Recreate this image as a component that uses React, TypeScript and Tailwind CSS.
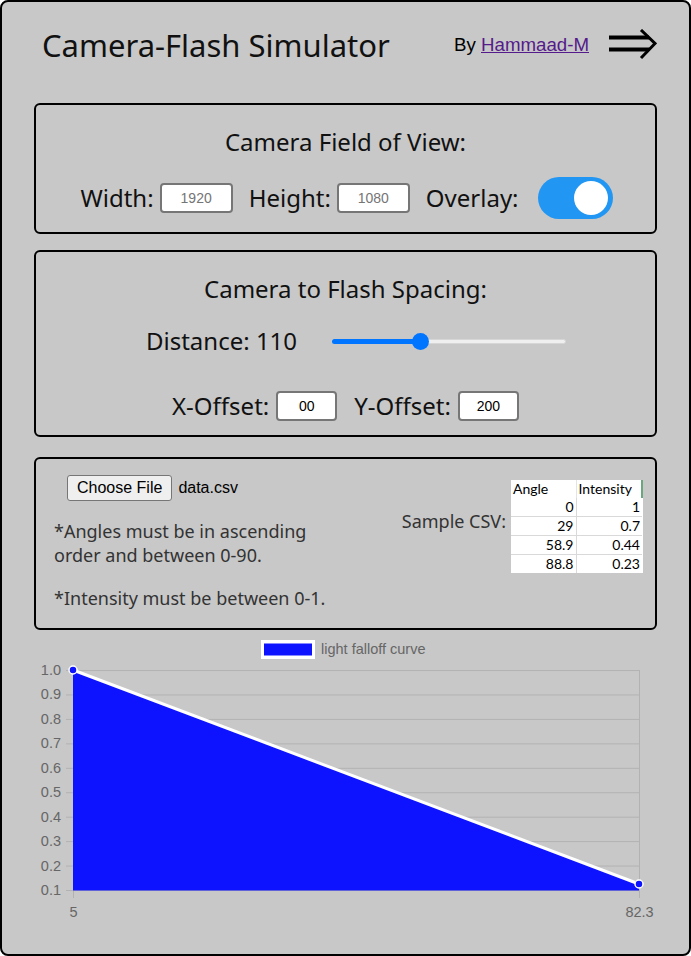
import React from "react";

const rows = [
    ["0", "1"],
    ["29", "0.7"],
    ["58.9", "0.44"],
    ["88.8", "0.23"],
];

function Chart() {
    const ticks = [1.0, 0.9, 0.8, 0.7, 0.6, 0.5, 0.4, 0.3, 0.2, 0.1];
    const yOf = (v: number) => 890 - ((v - 0.1) / 0.1) * 24.44;
    const blue = "#0d12ff";
    return (
        <svg width="687" height="296" viewBox="2 630 687 296" className="block -mx-[32px]">
            <rect x="261" y="640" width="54" height="19" fill="#fff" />
            <rect x="264" y="643.5" width="48" height="12" fill={blue} />
            <text x="321" y="654" fontSize="14.5" fill="#666" fontFamily="'Liberation Sans', Arial, sans-serif">
                light falloff curve
            </text>
            {ticks.map((t) => (
                <g key={t}>
                    <line x1="66" x2="639" y1={yOf(t) + 0.5} y2={yOf(t) + 0.5} stroke="#b2b2b2" strokeWidth="1" />
                    <text x="61" y={yOf(t) + 5} textAnchor="end" fontSize="14.5" fill="#666" fontFamily="'Liberation Sans', Arial, sans-serif">
                        {t.toFixed(1)}
                    </text>
                </g>
            ))}
            <line x1="73.5" x2="73.5" y1="670" y2="898" stroke="#b2b2b2" />
            <line x1="639.5" x2="639.5" y1="670" y2="898" stroke="#b2b2b2" />
            <polygon points={`73,670 639,884 639,890.5 73,890.5`} fill={blue} />
            <line x1="73" y1="670" x2="639" y2="884" stroke="#fff" strokeWidth="3" />
            <circle cx="73" cy="670" r="4" fill={blue} stroke="#fff" strokeWidth="1.5" />
            <circle cx="639" cy="884" r="4" fill={blue} stroke="#fff" strokeWidth="1.5" />
            <text x="73.5" y="917" textAnchor="middle" fontSize="14.5" fill="#666" fontFamily="'Liberation Sans', Arial, sans-serif">5</text>
            <text x="639.5" y="917" textAnchor="middle" fontSize="14.5" fill="#666" fontFamily="'Liberation Sans', Arial, sans-serif">82.3</text>
        </svg>
    );
}

function NumBox({ value, placeholder, w }: { value?: string; placeholder?: string; w: string }) {
    return (
        <div className={`${w} h-[30px] bg-white border-2 border-[#767676] rounded-[4px] flex items-center justify-center text-[14px] font-['Liberation_Sans',Arial,sans-serif]`}>
            {value ? <span className="text-black">{value}</span> : <span className="text-[#757575]">{placeholder}</span>}
        </div>
    );
}

export default function App() {
    return (
        <div className="w-[691px] h-[956px] border-2 border-black rounded-lg bg-[#c8c8c8] px-[32px] overflow-hidden font-['Noto_Sans',sans-serif] text-[#111]">
            <header className="h-[86px] flex items-center justify-between pl-[8px]">
                <h1 className="text-[31px] leading-none text-[#111]">Camera-Flash Simulator</h1>
                <div className="flex items-center gap-[20px]">
                    <span className="text-[18.7px] font-['Liberation_Sans',Arial,sans-serif] text-black">
                        By <a className="underline text-[#551a8b]" href="#">Hammaad-M</a>
                    </span>
                    <svg width="48" height="32" viewBox="0 0 48 32" className="block">
                        <path d="M0 8.5H40M0 20.5H40" stroke="#000" strokeWidth="4" />
                        <path d="M32 1L46 14.5L32 29" stroke="#000" strokeWidth="3" fill="none" />
                    </svg>
                </div>
            </header>

            <section className="mt-[15px] h-[131px] border-2 border-black rounded-md">
                <h2 className="mt-[22px] leading-[30px] text-[24px] text-center">Camera Field of View:</h2>
                <div className="mt-[20px] h-[42px] flex items-center justify-center text-[24px] pl-[2px]">
                    <span>Width:</span>
                    <div className="ml-[6px]"><NumBox placeholder="1920" w="w-[73px]" /></div>
                    <span className="ml-[16px]">Height:</span>
                    <div className="ml-[6px]"><NumBox placeholder="1080" w="w-[73px]" /></div>
                    <span className="ml-[16px]">Overlay:</span>
                    <div className="ml-[19px] w-[75px] h-[42px] rounded-full bg-[#2196f3] flex items-center justify-end pr-[5px]">
                        <div className="w-[34px] h-[34px] rounded-full bg-white" />
                    </div>
                </div>
            </section>

            <section className="mt-[16px] h-[187px] border-2 border-black rounded-md">
                <h2 className="mt-[22px] leading-[30px] text-[24px] text-center">Camera to Flash Spacing:</h2>
                <div className="mt-[22px] h-[30px] flex items-center text-[24px] pl-[110px]">
                    <span className="w-[186px]">Distance: 110</span>
                    <div className="relative w-[234px] h-[16px] flex items-center">
                        <div className="h-[5px] w-[88px] bg-[#0075ff] rounded-l-full" />
                        <div className="h-[5px] flex-1 bg-[#efefef] rounded-r-full border border-[#d6d6d6]" />
                        <div className="absolute left-[80px] top-0 w-[17px] h-[17px] rounded-full bg-[#0075ff]" />
                    </div>
                </div>
                <div className="mt-[35px] h-[30px] flex items-center justify-center text-[24px]">
                    <span>X-Offset:</span>
                    <div className="ml-[7px]"><NumBox value="00" w="w-[61px]" /></div>
                    <span className="ml-[17px]">Y-Offset:</span>
                    <div className="ml-[7px]"><NumBox value="200" w="w-[61px]" /></div>
                </div>
            </section>

            <section className="mt-[20px] h-[173px] border-2 border-black rounded-md flex justify-between">
                <div className="pt-[16px]">
                    <div className="pl-[31px] flex items-center gap-[6px] font-['Liberation_Sans',Arial,sans-serif] text-[16px] text-black">
                        <span className="h-[26px] px-[9px] flex items-center bg-[#efefef] border border-[#767676] rounded-[3px]">Choose File</span>
                        <span>data.csv</span>
                    </div>
                    <p className="pl-[18px] mt-[18px] text-[18px] leading-[24px] text-[#333]">
                        *Angles must be in ascending
                        <br />
                        order and between 0-90.
                    </p>
                    <p className="pl-[18px] mt-[19px] text-[18px] leading-[24px] text-[#333]">*Intensity must be between 0-1.</p>
                </div>
                <div className="pt-[21px] pr-[12px] flex items-center self-start gap-[5px]">
                    <span className="text-[18px] text-[#333] mb-[11px]">Sample CSV:</span>
                    <table className="bg-white border-collapse text-[14px] leading-[18px] font-['Lato',sans-serif] text-black">
                        <thead>
                            <tr>
                                <td className="w-[65px] px-[2px] text-left">Angle</td>
                                <td className="w-[66px] px-[2px] text-left border-l border-[#e4e4e4] border-r-2 border-r-[#6aa67e]">Intensity</td>
                            </tr>
                        </thead>
                        <tbody>
                            {rows.map((r, i) => (
                                <tr key={r[0]} className={i > 0 ? "border-t border-[#d9d9d9]" : ""}>
                                    <td className="px-[2px] text-right">{r[0]}</td>
                                    <td className="px-[2px] text-right border-l border-[#d9d9d9]">{r[1]}</td>
                                </tr>
                            ))}
                        </tbody>
                    </table>
                </div>
            </section>

            <Chart />
        </div>
    );
}
